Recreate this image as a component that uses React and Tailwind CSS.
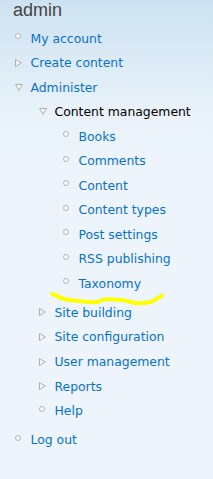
import React from "react";

const tree = [
  { label: "My account", type: "leaf" },
  { label: "Create content", type: "collapsed" },
  {
    label: "Administer",
    type: "expanded",
    children: [
      {
        label: "Content management",
        type: "expanded",
        active: true,
        children: [
          { label: "Books", type: "leaf" },
          { label: "Comments", type: "leaf" },
          { label: "Content", type: "leaf" },
          { label: "Content types", type: "leaf" },
          { label: "Post settings", type: "leaf" },
          { label: "RSS publishing", type: "leaf" },
          { label: "Taxonomy", type: "leaf", marked: true },
        ],
      },
      { label: "Site building", type: "collapsed" },
      { label: "Site configuration", type: "collapsed" },
      { label: "User management", type: "collapsed" },
      { label: "Reports", type: "collapsed" },
      { label: "Help", type: "leaf" },
    ],
  },
  { label: "Log out", type: "leaf" },
];

function Marker({ type }) {
  if (type === "leaf") {
    return (
      <span className="mt-[6.5px] block h-[6px] w-[6px] rounded-full border border-[#b4b4b4] bg-[#fafafa]" />
    );
  }
  if (type === "collapsed") {
    return (
      <svg width="7" height="8" viewBox="0 0 7 8" className="mt-[7.5px] block">
        <path d="M0.5 0.5 L6.3 4 L0.5 7.5 Z" fill="#f4f4f4" stroke="#b0b0b0" strokeWidth="1" />
      </svg>
    );
  }
  return (
    <svg width="8" height="7" viewBox="0 0 8 7" className="mt-[8px] block">
      <path d="M0.5 0.5 L7.5 0.5 L4 6.3 Z" fill="#f4f4f4" stroke="#b0b0b0" strokeWidth="1" />
    </svg>
  );
}

function Menu({ items, nested }) {
  return (
    <ul className={nested ? "pl-[24px] mb-[4.4px]" : "pl-[15px]"}>
      {items.map((item) => (
        <li key={item.label}>
          <div className="relative flex h-[24.55px] items-start">
            <span className="flex w-[15.5px] shrink-0">
              <Marker type={item.type} />
            </span>
            <a
              href="#"
              className={`leading-[24.55px] whitespace-nowrap ${item.active ? "text-black" : "text-[#0872c4]"}`}
            >
              {item.label}
            </a>
            {item.marked && (
              // yellow hand-drawn underline
              <svg
                width="116"
                height="16"
                viewBox="0 0 116 16"
                className="absolute left-[-13px] top-[18px]"
              >
                <path
                  d="M2.3 4 C 8 6, 11 8.5, 15 9.3 C 20 10.5, 24 10.8, 28 11 C 35 11.5, 40 12.3, 45 12.3 C 50 12, 52 9.5, 55 9.3 C 62 9, 66 9.6, 71.7 10 C 78 10.8, 83 13.3, 88 13.3 C 93 13.3, 98 12.5, 101.7 11.7 C 105 10.5, 108 7.5, 111.7 5.7"
                  fill="none"
                  stroke="#ffff00"
                  strokeWidth="4"
                  strokeLinecap="round"
                  strokeLinejoin="round"
                />
              </svg>
            )}
          </div>
          {item.children && <Menu items={item.children} nested />}
        </li>
      ))}
    </ul>
  );
}

export default function App() {
  return (
    <div className="min-h-[479px] w-[213px] bg-[linear-gradient(to_bottom,#cde2f1_0px,#eaf3fa_120px,#edf4fb_160px)] font-['DejaVu_Sans',Verdana,sans-serif] text-[12.4px]">
      <h2 className="pl-[13px] font-['Liberation_Sans',Arial,sans-serif] text-[18px] leading-[20px] text-[#444]">
        admin
      </h2>
      <div className="pt-[6.5px]">
        <Menu items={tree} />
      </div>
    </div>
  );
}
